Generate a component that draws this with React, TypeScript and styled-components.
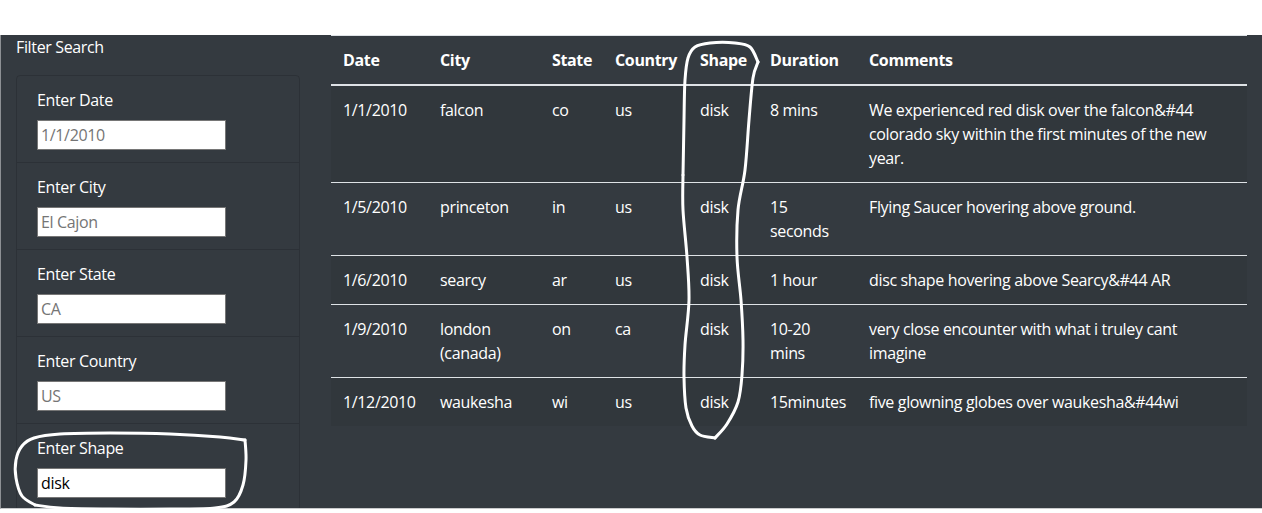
import React from 'react';
import styled, { createGlobalStyle } from 'styled-components';

const GlobalStyle = createGlobalStyle`
  html, body { margin: 0; padding: 0; background: #ffffff; }
  body {
    font-family: "Open Sans", "Noto Sans", sans-serif;
    font-size: 16px;
    line-height: 24px;
    letter-spacing: -0.35px;
    color: #ffffff;
  }
  * { box-sizing: border-box; }
`;

const Page = styled.div`
  position: relative;
  width: 1262px;
  height: 513px;
  overflow: hidden;
  padding-top: 35px;
`;

const Dark = styled.main`
  display: grid;
  grid-template-columns: 315px 1fr;
  height: 474px;
  background: #343a40;
  border-left: 1px solid #8d9094;
  border-bottom: 1px solid #c9cacc;
  overflow: hidden;
`;

const Sidebar = styled.aside`
  padding: 0 15px 0 15px;
`;

const SideTitle = styled.div`
  margin: 0 0 16px;
  font-size: 16px;
  line-height: 24px;
`;

const ListGroup = styled.ul`
  list-style: none;
  margin: 0;
  padding: 0;
  width: 284px;
  border: 1px solid rgba(0, 0, 0, 0.14);
  border-radius: 4px;
`;

const ListItem = styled.li`
  display: flex;
  flex-direction: column;
  align-items: flex-start;
  padding: 12px 20px;
  border-bottom: 1px solid rgba(0, 0, 0, 0.14);
  &:last-child { border-bottom: none; }
`;

const Label = styled.label`
  display: block;
  margin-bottom: 8px;
  line-height: 24px;
`;

const Input = styled.input`
  width: 189px;
  height: 30px;
  padding: 1px 3px;
  font-family: "Open Sans", "Noto Sans", sans-serif;
  font-size: 16px;
  letter-spacing: -0.35px;
  color: #000000;
  background: #ffffff;
  border: 1px solid #767676;
  border-radius: 0;
  outline: none;
  &::placeholder { color: #757575; opacity: 1; }
`;

const Content = styled.section`
  padding: 0 15px;
`;

const Table = styled.table`
  width: 916px;
  table-layout: fixed;
  border-collapse: collapse;
`;

const Th = styled.th`
  padding: 12px;
  text-align: left;
  vertical-align: bottom;
  font-weight: 700;
  white-space: nowrap;
  border-top: 1px solid #dee2e6;
  border-bottom: 2px solid #dee2e6;
`;

const Row = styled.tr<{ $striped: boolean }>`
  background: ${(p) => (p.$striped ? 'rgba(0, 0, 0, 0.05)' : 'transparent')};
`;

const Td = styled.td`
  padding: 12px;
  vertical-align: top;
  border-top: 1px solid #dee2e6;
`;

const Overlay = styled.svg`
  position: absolute;
  left: 0;
  top: 0;
  pointer-events: none;
`;

type P = [number, number];

function smooth(pts: P[]): string {
  let d = `M ${pts[0][0]} ${pts[0][1]}`;
  for (let i = 0; i < pts.length - 1; i++) {
    const p0 = pts[i - 1] || pts[i];
    const p1 = pts[i];
    const p2 = pts[i + 1];
    const p3 = pts[i + 2] || p2;
    const c1x = p1[0] + (p2[0] - p0[0]) / 6;
    const c1y = p1[1] + (p2[1] - p0[1]) / 6;
    const c2x = p2[0] - (p3[0] - p1[0]) / 6;
    const c2y = p2[1] - (p3[1] - p1[1]) / 6;
    d += ` C ${c1x.toFixed(1)} ${c1y.toFixed(1)} ${c2x.toFixed(1)} ${c2y.toFixed(1)} ${p2[0]} ${p2[1]}`;
  }
  return d;
}

const shapeLoopA: P[] = [
  [683, 175], [684, 120], [685, 80], [688, 58], [695, 47], [710, 43], [735, 43], [750, 47], [758, 62],
];
const shapeLoopB: P[] = [
  [758, 62], [753, 78], [749, 120], [745, 170], [738, 210], [737, 257], [741, 300], [743, 340],
  [742, 375], [738, 402], [727, 424], [715, 438],
];
const shapeLoopC: P[] = [
  [715, 438], [700, 435], [692, 426], [686, 408], [684, 377], [685, 345], [689, 300], [687, 257],
  [683, 210], [683, 175],
];

const filterLoopA: P[] = [
  [35, 505], [22, 496], [16, 478], [16, 460], [22, 446], [34, 438], [60, 434], [110, 433],
  [170, 434], [220, 437], [245, 440],
];
const filterLoopB: P[] = [
  [245, 440], [246, 460], [243, 485], [234, 502], [215, 508], [170, 509], [110, 509], [60, 508], [35, 505],
];

const rows = [
  ['1/1/2010', 'falcon', 'co', 'us', 'disk', '8 mins', 'We experienced red disk over the falcon&#44 colorado sky within the first minutes of the new year.'],
  ['1/5/2010', 'princeton', 'in', 'us', 'disk', '15 seconds', 'Flying Saucer hovering above ground.'],
  ['1/6/2010', 'searcy', 'ar', 'us', 'disk', '1 hour', 'disc shape hovering above Searcy&#44 AR'],
  ['1/9/2010', 'london (canada)', 'on', 'ca', 'disk', '10-20 mins', 'very close encounter with what i truley cant imagine'],
  ['1/12/2010', 'waukesha', 'wi', 'us', 'disk', '15minutes', 'five glowning globes over waukesha&#44wi'],
];

const headers = ['Date', 'City', 'State', 'Country', 'Shape', 'Duration', 'Comments'];
const widths = [97, 112, 63, 85, 70, 99, 390];

const filters = [
  { label: 'Enter Date', placeholder: '1/1/2010', value: '' },
  { label: 'Enter City', placeholder: 'El Cajon', value: '' },
  { label: 'Enter State', placeholder: 'CA', value: '' },
  { label: 'Enter Country', placeholder: 'US', value: '' },
  { label: 'Enter Shape', placeholder: 'light', value: 'disk' },
];

export default function App() {
  return (
    <Page>
      <GlobalStyle />
      <Dark>
        <Sidebar>
          <SideTitle>Filter Search</SideTitle>
          <ListGroup>
            {filters.map((f) => (
              <ListItem key={f.label}>
                <Label>{f.label}</Label>
                <Input placeholder={f.placeholder} defaultValue={f.value} />
              </ListItem>
            ))}
          </ListGroup>
        </Sidebar>
        <Content>
          <Table>
            <colgroup>
              {widths.map((w, i) => (
                <col key={i} style={{ width: w }} />
              ))}
            </colgroup>
            <thead>
              <tr>
                {headers.map((h) => (
                  <Th key={h}>{h}</Th>
                ))}
              </tr>
            </thead>
            <tbody>
              {rows.map((r, i) => (
                <Row key={i} $striped={i % 2 === 0}>
                  {r.map((c, j) => (
                    <Td key={j}>{c}</Td>
                  ))}
                </Row>
              ))}
            </tbody>
          </Table>
        </Content>
      </Dark>
      <Overlay width={1262} height={513} viewBox="0 0 1262 513">
        <g fill="none" stroke="#ffffff" strokeWidth={3} strokeLinecap="round" strokeLinejoin="round">
          <path d={smooth(shapeLoopA)} />
          <path d={smooth(shapeLoopB)} />
          <path d={smooth(shapeLoopC)} />
          <path d={smooth(filterLoopA)} />
          <path d={smooth(filterLoopB)} />
        </g>
      </Overlay>
    </Page>
  );
}
